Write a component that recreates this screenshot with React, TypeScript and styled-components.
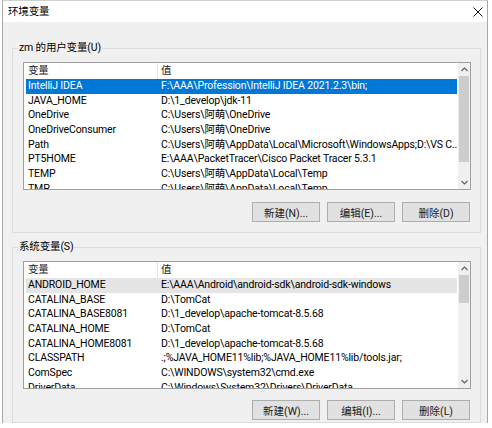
import React from "react"
import styled, { createGlobalStyle } from "styled-components"

const FONT = `Roboto, "Noto Sans CJK SC", sans-serif`

type EnvVar = { name: string; value: string }

const userVars: Array<EnvVar> = [
  { name: "IntelliJ IDEA", value: "F:\\AAA\\Profession\\IntelliJ IDEA 2021.2.3\\bin;" },
  { name: "JAVA_HOME", value: "D:\\1_develop\\jdk-11" },
  { name: "OneDrive", value: "C:\\Users\\阿萌\\OneDrive" },
  { name: "OneDriveConsumer", value: "C:\\Users\\阿萌\\OneDrive" },
  { name: "Path", value: "C:\\Users\\阿萌\\AppData\\Local\\Microsoft\\WindowsApps;D:\\VS C..." },
  { name: "PT5HOME", value: "E:\\AAA\\PacketTracer\\Cisco Packet Tracer 5.3.1" },
  { name: "TEMP", value: "C:\\Users\\阿萌\\AppData\\Local\\Temp" },
  { name: "TMP", value: "C:\\Users\\阿萌\\AppData\\Local\\Temp" },
]

const systemVars: Array<EnvVar> = [
  { name: "ANDROID_HOME", value: "E:\\AAA\\Android\\android-sdk\\android-sdk-windows" },
  { name: "CATALINA_BASE", value: "D:\\TomCat" },
  { name: "CATALINA_BASE8081", value: "D:\\1_develop\\apache-tomcat-8.5.68" },
  { name: "CATALINA_HOME", value: "D:\\TomCat" },
  { name: "CATALINA_HOME8081", value: "D:\\1_develop\\apache-tomcat-8.5.68" },
  { name: "CLASSPATH", value: ".;%JAVA_HOME11%lib;%JAVA_HOME11%lib/tools.jar;" },
  { name: "ComSpec", value: "C:\\WINDOWS\\system32\\cmd.exe" },
  { name: "DriverData", value: "C:\\Windows\\System32\\Drivers\\DriverData" },
]

type Selection = "focused" | "inactive"

const Arrow: React.FC<{ down?: boolean }> = ({ down }) => (
  <svg width="7" height="5" viewBox="0 0 7 5">
    <polyline
      points={down ? "0.5,1 3.5,4 6.5,1" : "0.5,4 3.5,1 6.5,4"}
      fill="none"
      stroke="#606060"
      strokeWidth="1.1"
    />
  </svg>
)

const VarList: React.FC<{
  vars: Array<EnvVar>
  selected: number
  selection: Selection
  thumbTop: number
  thumbHeight: number
}> = ({ vars, selected, selection, thumbTop, thumbHeight }) => {
  return (
    <S.ListView>
      <S.ListMain>
        <S.Header>
          <S.NameCell $header>变量</S.NameCell>
          <S.ValueCell>值</S.ValueCell>
        </S.Header>
        {vars.map((v, i) => (
          <S.Row key={v.name} $state={i === selected ? selection : undefined}>
            <S.NameCell>{v.name}</S.NameCell>
            <S.ValueCell>{v.value}</S.ValueCell>
          </S.Row>
        ))}
      </S.ListMain>
      <S.ScrollBar>
        <S.ScrollButton>
          <Arrow />
        </S.ScrollButton>
        <S.Track>
          <S.Thumb $top={thumbTop} $height={thumbHeight} />
        </S.Track>
        <S.ScrollButton>
          <Arrow down />
        </S.ScrollButton>
      </S.ScrollBar>
    </S.ListView>
  )
}

export default function App() {
  return (
    <>
      <GlobalStyle />
      <S.Window>
        <S.TitleBar>
          <S.Title>环境变量</S.Title>
          <svg width="10" height="10" viewBox="0 0 10 10">
            <path d="M0.5 0.5 L9.5 9.5 M9.5 0.5 L0.5 9.5" stroke="#1a1a1a" strokeWidth="1" />
          </svg>
        </S.TitleBar>
        <S.Body>
          <S.GroupBox $height={185}>
            <S.GroupLabel>zm 的用户变量(U)</S.GroupLabel>
            <VarList vars={userVars} selected={0} selection="focused" thumbTop={0} thumbHeight={86} />
            <S.ButtonRow $gap={12}>
              <S.Button>新建(N)...</S.Button>
              <S.Button>编辑(E)...</S.Button>
              <S.Button>删除(D)</S.Button>
            </S.ButtonRow>
          </S.GroupBox>
          <S.GroupBox $height={176}>
            <S.GroupLabel>系统变量(S)</S.GroupLabel>
            <VarList vars={systemVars} selected={0} selection="inactive" thumbTop={0} thumbHeight={28} />
            <S.ButtonRow $gap={11}>
              <S.Button>新建(W)...</S.Button>
              <S.Button>编辑(I)...</S.Button>
              <S.Button>删除(L)</S.Button>
            </S.ButtonRow>
          </S.GroupBox>
        </S.Body>
      </S.Window>
    </>
  )
}

const GlobalStyle = createGlobalStyle`
  html, body {
    margin: 0;
    padding: 0;
    background: #ffffff;
  }
  body {
    font-family: ${FONT};
    font-size: 10.5px;
    letter-spacing: -0.15px;
    color: #000;
  }
  * {
    box-sizing: border-box;
  }
`

const S = {
  Window: styled.div`
    display: flex;
    flex-direction: column;
    width: 486px;
    height: 423px;
    margin-left: 2px;
    overflow: hidden;
    border: 1px solid #a8a8a8;
    border-top-color: #cfcfcf;
    border-bottom: none;
  `,
  TitleBar: styled.div`
    display: flex;
    align-items: center;
    justify-content: space-between;
    height: 21px;
    padding: 1px 4px 0 5px;
    background: #ffffff;
  `,
  Title: styled.span`
    font-size: 10.5px;
    line-height: 14px;
  `,
  Body: styled.div`
    flex: 1;
    display: flex;
    flex-direction: column;
    gap: 14px;
    padding: 26px 6px 0 9px;
    background: #f0f0f0;
  `,
  GroupBox: styled.div<{ $height: number }>`
    position: relative;
    flex-shrink: 0;
    height: ${(p) => p.$height}px;
    padding: 13px 9px 0 10px;
    border: 1px solid #dcdcdc;
  `,
  GroupLabel: styled.span`
    position: absolute;
    top: -8px;
    left: 5px;
    padding: 0 1px;
    line-height: 14px;
    background: #f0f0f0;
  `,
  ListView: styled.div`
    display: flex;
    height: 128px;
    border: 1px solid #a0a0a0;
    background: #ffffff;
  `,
  ListMain: styled.div`
    flex: 1;
    min-width: 0;
    display: flex;
    flex-direction: column;
    padding: 0 1px 0 2px;
    overflow: hidden;
  `,
  Header: styled.div`
    display: flex;
    flex-shrink: 0;
    height: 16px;
    line-height: 16px;
    color: #1e1e1e;
  `,
  Row: styled.div<{ $state?: Selection }>`
    display: flex;
    flex-shrink: 0;
    height: 14.7px;
    line-height: 14.7px;
    white-space: nowrap;
    background: ${(p) => (p.$state === "focused" ? "#0078d7" : p.$state === "inactive" ? "#e5e5e5" : "transparent")};
    color: ${(p) => (p.$state === "focused" ? "#ffffff" : "#000000")};
  `,
  NameCell: styled.div<{ $header?: boolean }>`
    flex: 0 0 132px;
    padding-left: 2px;
    overflow: hidden;
    border-right: 1px solid ${(p) => (p.$header ? "#e5e5e5" : "transparent")};
  `,
  ValueCell: styled.div`
    flex: 1;
    min-width: 0;
    padding-left: 3px;
    overflow: hidden;
    white-space: nowrap;
  `,
  ScrollBar: styled.div`
    display: flex;
    flex-direction: column;
    width: 12px;
    background: #f0f0f0;
  `,
  ScrollButton: styled.div`
    display: flex;
    align-items: center;
    justify-content: center;
    height: 13px;
    flex-shrink: 0;
  `,
  Track: styled.div`
    flex: 1;
    display: flex;
    flex-direction: column;
  `,
  Thumb: styled.div<{ $top: number; $height: number }>`
    margin: ${(p) => p.$top}px 1px 0;
    height: ${(p) => p.$height}px;
    background: #cdcdcd;
  `,
  ButtonRow: styled.div<{ $gap: number }>`
    display: flex;
    justify-content: flex-end;
    gap: 7px;
    margin-top: ${(p) => p.$gap}px;
    padding-right: 1px;
  `,
  Button: styled.button`
    width: 68px;
    height: 20px;
    padding: 0;
    border: 1px solid #adadad;
    background: #e1e1e1;
    font-family: ${FONT};
    font-size: 10.5px;
    color: #1a1a1a;
  `,
}
